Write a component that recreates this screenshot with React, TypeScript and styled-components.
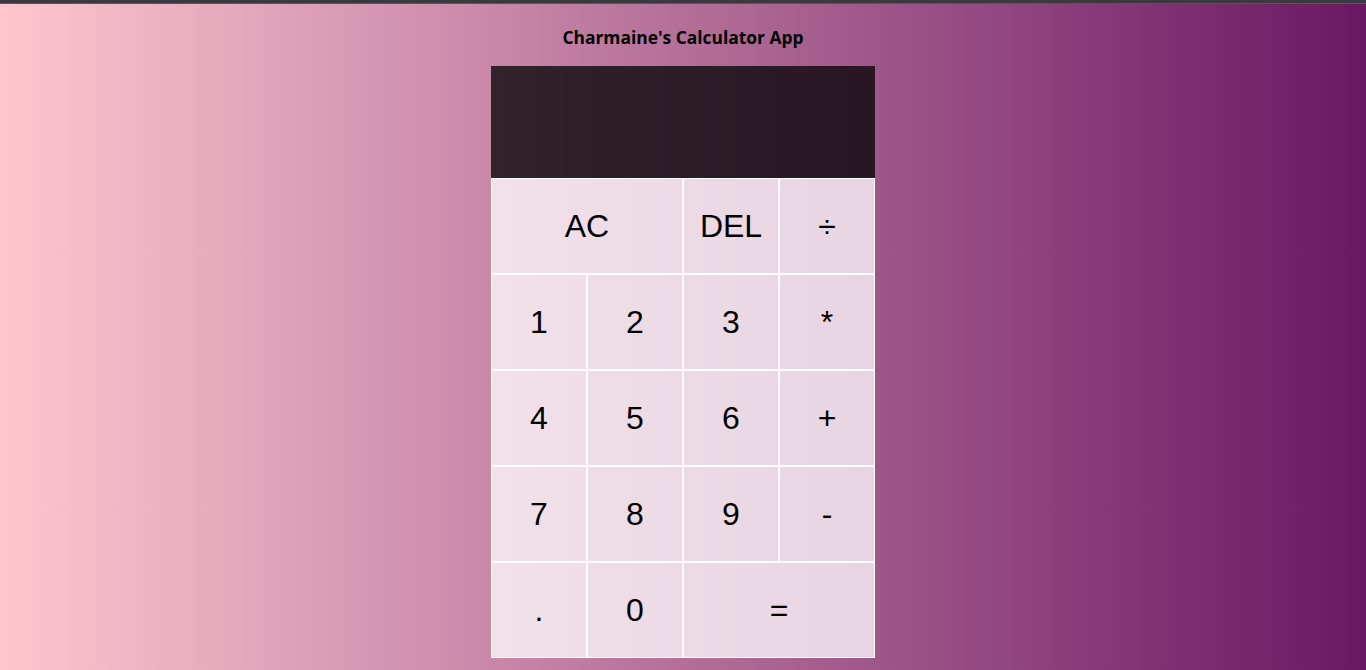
import React from "react";
import styled, { createGlobalStyle } from "styled-components";

const Global = createGlobalStyle`
  *, *::before, *::after { box-sizing: border-box; }
  html, body { margin: 0; padding: 0; height: 100%; }
  body {
    background: linear-gradient(to right, #ffc6cf, #681862);
    font-family: "Liberation Sans", Arial, sans-serif;
    overflow: hidden;
  }
`;

const TopBar = styled.div`
  height: 4px;
  background: #3a3a3e;
  border-bottom: 1px solid #58585c;
`;

const Page = styled.div`
  display: flex;
  flex-direction: column;
  align-items: center;
`;

const Title = styled.h1`
  margin: 0;
  padding-top: 22px;
  height: 62px;
  font-family: "Open Sans", "Noto Sans", sans-serif;
  font-weight: 700;
  font-size: 17.4px;
  line-height: 22px;
  color: #000;
`;

const Grid = styled.div`
  display: grid;
  grid-template-columns: repeat(4, 96px);
  grid-template-rows: 112px repeat(5, 96px);
`;

const Output = styled.div`
  grid-column: 1 / -1;
  background: rgba(0, 0, 0, 0.75);
`;

const Key = styled.button<{ $span?: number }>`
  grid-column: span ${(p) => p.$span ?? 1};
  border: 1px solid #fff;
  background: rgba(255, 255, 255, 0.75);
  font-family: "Liberation Sans", Arial, sans-serif;
  font-size: 32px;
  color: #000;
  padding: 0;
  margin: 0;
  outline: none;
  cursor: pointer;
`;

const keys: [string, number?][] = [
  ["AC", 2], ["DEL"], ["÷"],
  ["1"], ["2"], ["3"], ["*"],
  ["4"], ["5"], ["6"], ["+"],
  ["7"], ["8"], ["9"], ["-"],
  ["."], ["0"], ["=", 2],
];

export default function App() {
  return (
    <>
      <Global />
      <TopBar />
      <Page>
        <Title>Charmaine's Calculator App</Title>
        <Grid>
          <Output />
          {keys.map(([k, s], i) => (
            <Key key={i} $span={s}>{k}</Key>
          ))}
        </Grid>
      </Page>
    </>
  );
}
